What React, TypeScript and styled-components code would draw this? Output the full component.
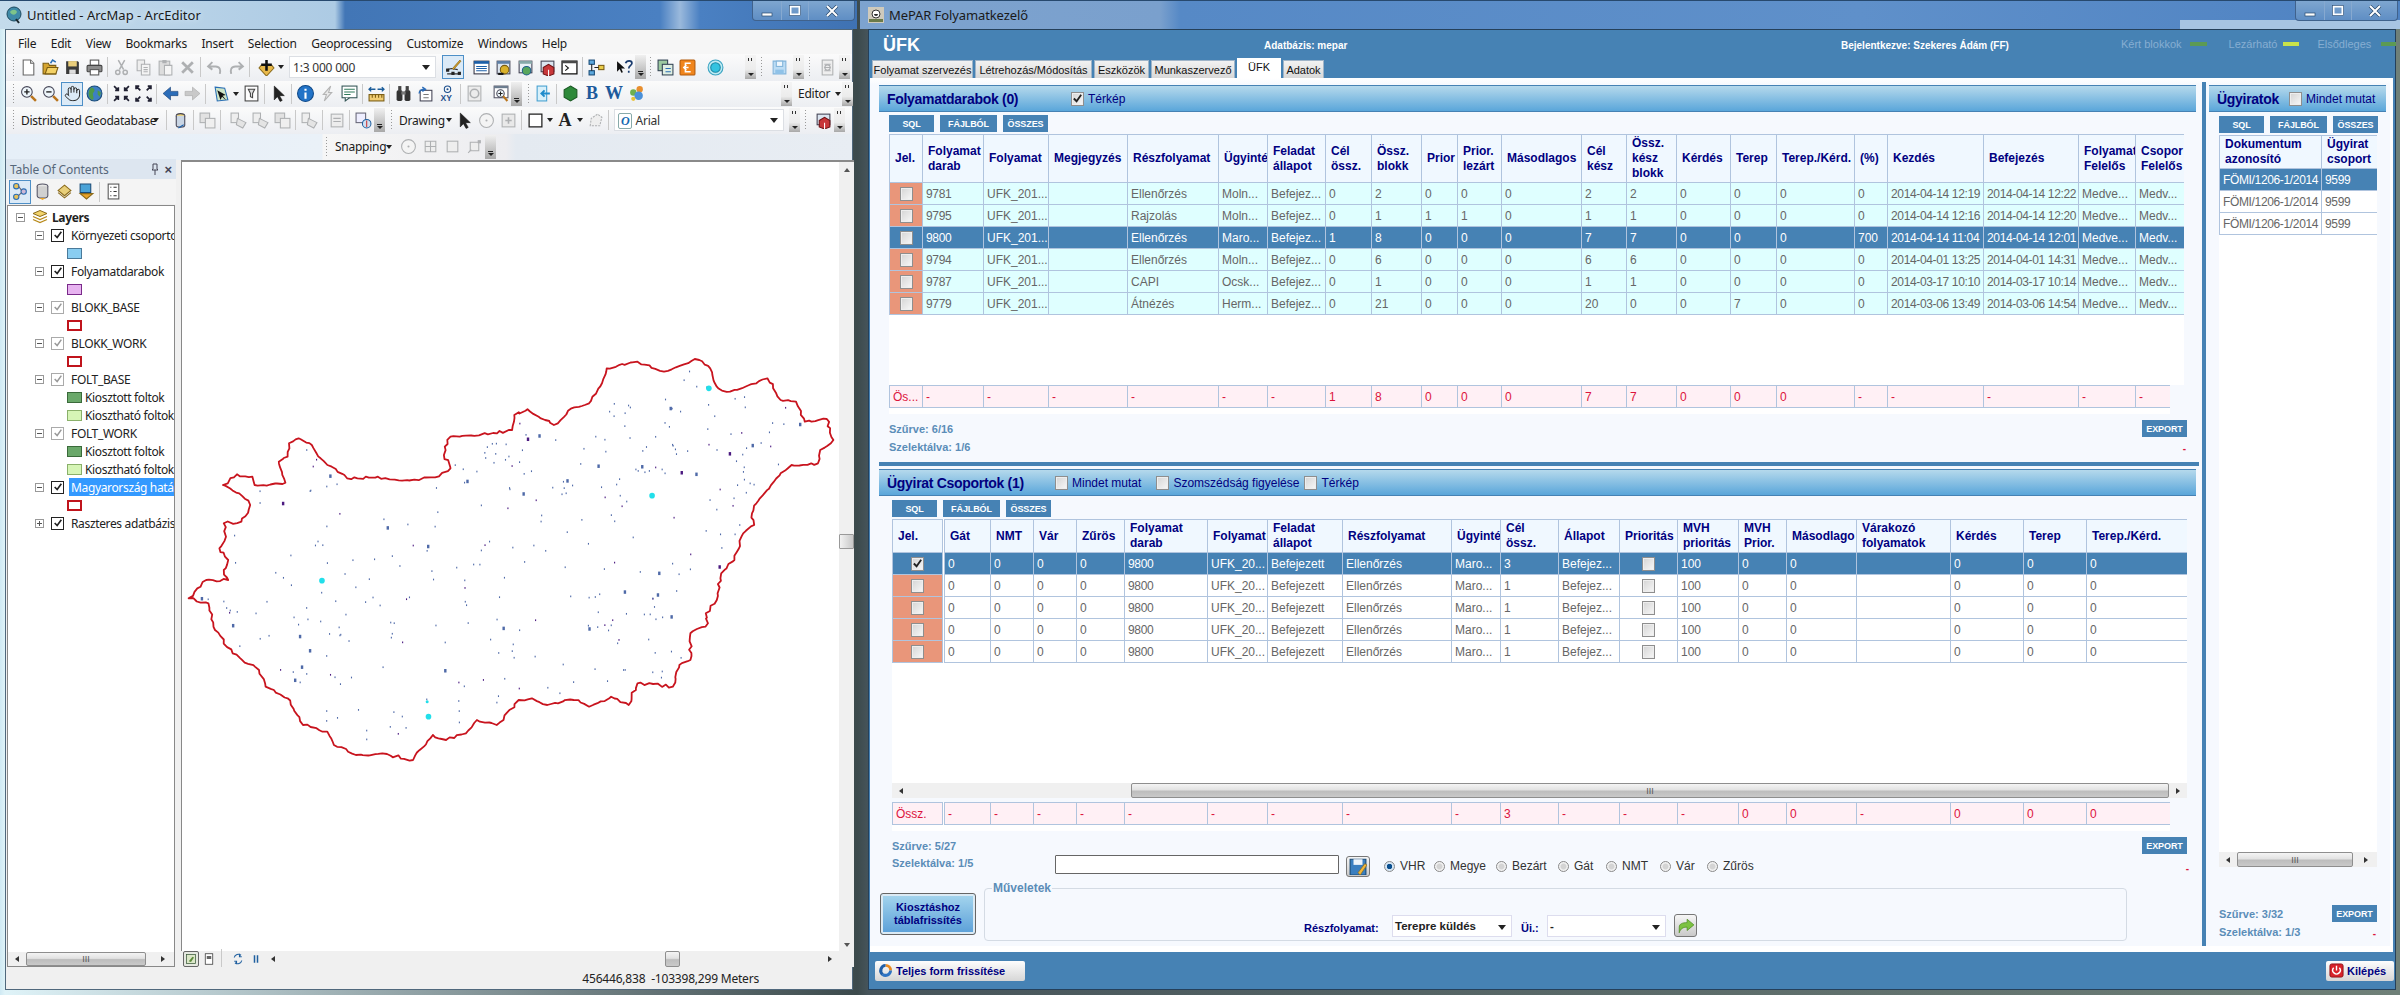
import React, { ReactNode } from 'react';
import styled, { createGlobalStyle } from 'styled-components';
import { Hand } from 'lucide-react';

const Global = createGlobalStyle`
  html, body { margin: 0; padding: 0; width: 2400px; height: 995px; overflow: hidden; background: #3c4a4c; font-family: "Liberation Sans", Arial, sans-serif; }
  * { box-sizing: border-box; }
`;

/* ---------- desktop ---------- */
const Desktop = styled.div`
  display: flex; width: 2400px; height: 995px;
  background: linear-gradient(90deg, #cfe9f3 0, #dff3f8 5px, #3c4a4c 857px, #46545a 868px, #6f8078 2396px);
`;
const ArcWin = styled.div`display: flex; flex-direction: column; width: 857px; height: 995px;`;
const ArcTitle = styled.div`
  height: 29px; display: flex; align-items: center; justify-content: space-between; padding-left: 6px; flex: none;
  background: linear-gradient(90deg, #c4dbec 0, #adcbe4 335px, #4276b6 345px, #4a80c2 660px, #9ab9dc 680px, #4a80c2 700px, #3f72b3 857px);
  border-top: 1px solid #27496e;
`;
const TitleIcon = styled.svg`width: 16px; height: 18px; flex: none;`;
const TitleText = styled.span`font: 13px "Noto Sans", sans-serif; color: #1a1a1a; margin-left: 5px; flex: 1; text-shadow: 0 0 6px #dfeffa;`;
const WinBtns = styled.div`
  display: flex; height: 20px; align-self: flex-start; margin-right: 2px; border: 1px solid #40628c; border-top: none; border-radius: 0 0 4px 4px;
  background: linear-gradient(#7ea6d0, #5f8ec4);
`;
const WinBtn = styled.div<{ $w: number }>`
  width: ${p => p.$w}px; display: flex; align-items: center; justify-content: center; border-left: 1px solid #86a9d0;
  &:first-child { border-left: none; }
  svg { width: 14px; height: 12px; }
`;
const ArcBody = styled.div`
  margin: 0 4px 0 5px; height: 961px; display: flex; flex-direction: column; background: #f0f0f0;
  border: 1px solid #50687c; border-width: 1px 1px 1px 1px;
`;
const MenuBar = styled.div`height: 24px; padding: 3px 0 0 12px; display: flex; align-items: center; gap: 14.5px; background: #f6f6f6; flex: none;`;
const MenuItem = styled.span`font: 12px "Noto Sans", sans-serif; color: #1b1b1b; letter-spacing: -0.25px;`;
const ToolRow = styled.div`
  height: 26.5px; flex: none; display: flex; align-items: center; padding-left: 6px;
  background: linear-gradient(#fbfbfb, #eceef2);
`;
const Dock = styled(ToolRow)`background: linear-gradient(90deg, #e6eff8 0, #eaf1f8 316px, #f6f6f6 317px, #ededf0 500px, #e4eaf1 510px, #e8edf3 851px);`;
const Tool = styled.div<{ $active?: boolean; $w?: number }>`
  width: ${p => p.$w ?? 22}px; height: 24px; flex: none; display: flex; align-items: center; justify-content: center;
  ${p => p.$active ? 'background: #dbeaf7; outline: 1px solid #4d8fc7; outline-offset: -1px;' : ''}
  svg { width: 17px; height: 17px; display: block; }
`;
const Grip = styled.div`width: 4px; height: 20px; flex: none; background: repeating-linear-gradient(#9a9a9a 0 1px, transparent 1px 3px); margin: 0 0 0 1px; background-size: 1px 100%; background-repeat: no-repeat;`;
const Sep = styled.div`width: 1px; height: 20px; flex: none; margin: 0 2px; background: #c9c9c9;`;
const Gap = styled.div<{ $w: number }>`width: ${p => p.$w}px; flex: none;`;
const Drop = styled.div`width: 8px; flex: none; display: flex; justify-content: center; &::after { content: ""; border: 3.5px solid transparent; border-top: 4px solid #222; border-bottom: 0; }`;
const Chevron = styled.div`
  width: 11px; height: 24px; flex: none; background: linear-gradient(#f0f0f0, #a8a8a8); display: flex; flex-direction: column; align-items: center; justify-content: flex-end; padding-bottom: 3px;
  &::before { content: ""; width: 5px; height: 1px; background: #222; margin-bottom: 1px; }
  &::after { content: ""; border: 3px solid transparent; border-top: 3px solid #222; border-bottom: 0; }
`;
const Over = styled(Chevron)`
  background: linear-gradient(#f4f4f4 0, #ececec 60%, #a8a8a8 100%); justify-content: space-between; padding: 3px 0;
  &::before { width: 6px; height: 3px; background: repeating-linear-gradient(90deg, #333 0 1px, transparent 1px 3px); }
`;
const ToolLabel = styled.span<{ $w?: number }>`font: 12px "Noto Sans", sans-serif; color: #1b1b1b; letter-spacing: -0.25px; white-space: nowrap; flex: none; ${p => p.$w ? `width:${p.$w}px;` : ''}`;
const Combo = styled.div<{ $w: number }>`
  width: ${p => p.$w}px; height: 22px; flex: none; background: #fff; border: 1px solid #dcdfe4; display: flex; align-items: center; padding: 0 5px 0 3px; justify-content: space-between;
  font: 12px "Noto Sans", sans-serif; color: #333; letter-spacing: -0.2px;
  &::after { content: ""; border: 4px solid transparent; border-top: 5px solid #222; border-bottom: 0; }
`;
const FontIcon = styled.span`font: italic bold 12px "Liberation Serif", serif; color: #1668b0; border: 1px solid #8aa; border-radius: 2px; padding: 0 2px; margin-right: 3px;`;
const SerifGlyph = styled.span<{ $c: string }>`font: bold 18px "Liberation Serif", serif; color: ${p => p.$c};`;
const Work = styled.div`flex: 1; display: flex; min-height: 0;`;
const TocCol = styled.div`width: 170px; flex: none; display: flex; flex-direction: column;`;
const TocHead = styled.div`height: 20px; flex: none; margin-top: -1px; background: #dde6f0; display: flex; align-items: center; justify-content: space-between; padding: 0 4px 0 4px;`;
const TocTitle = styled.span`font: 12px "Noto Sans", sans-serif; color: #56677a; letter-spacing: -0.1px;`;
const TocBtns = styled.span`font: bold 13px "Liberation Sans", sans-serif; color: #445; display: flex; gap: 4px; align-items: center;`;
const TocTools = styled.div`height: 25px; flex: none; display: flex; align-items: center; background: #f4f4f4; padding-left: 3px;`;
const TreeBox = styled.div`flex: 1; margin: 1px 0 0 1px; width: 168px; background: #fff; border: 1px solid #888; display: flex; flex-direction: column; min-height: 0;`;
const TreeScroll = styled.div`flex: 1; padding-top: 2px; overflow: hidden;`;
const TreeRow = styled.div<{ $pad: number }>`height: 18px; display: flex; align-items: center; padding-left: ${p => p.$pad}px; white-space: nowrap; overflow: hidden;`;
const Expander = styled.span<{ $plus?: boolean }>`
  width: 9px; height: 9px; flex: none; border: 1px solid #999; position: relative; background: #fff; margin-right: 7px;
  &::before { content: ""; position: absolute; left: 1px; right: 1px; top: 3px; height: 1px; background: #555; }
  ${p => p.$plus ? '&::after { content: ""; position: absolute; top: 1px; bottom: 1px; left: 3px; width: 1px; background: #555; }' : ''}
`;
const TocBox = styled.span<{ $gray?: boolean }>`
  width: 13px; height: 13px; flex: none; border: 1px solid ${p => p.$gray ? '#aaa' : '#222'}; background: #fff; margin-right: 7px; display: flex; align-items: center; justify-content: center;
  svg { width: 10px; height: 10px; }
`;
const TreeText = styled.span<{ $sel?: boolean }>`
  font: 12px "Noto Sans", sans-serif; color: #222; letter-spacing: -0.35px;
  ${p => p.$sel ? 'background: #3399ff; color: #fff; padding: 1px 40px 1px 2px; margin-left: -2px;' : ''}
`;
const Swatch = styled.span<{ $bg: string; $bd: string; $thick?: boolean }>`
  width: 15px; height: 11px; flex: none; background: ${p => p.$bg}; border: ${p => p.$thick ? 2 : 1}px solid ${p => p.$bd}; margin-right: 3px;
`;
const MapCol = styled.div`width: 673px; margin-left: 5px; flex: none; display: flex; flex-direction: column;`;
const MapArea = styled.div`flex: 1; display: flex; border-top: 2px solid #8a8a8a; min-height: 0;`;
const MapCanvas = styled.div`flex: 1; background: #fff; border-left: 1px solid #888; svg { display: block; }`;
const VBar = styled.div`width: 15px; flex: none; background: #f0f0f0; display: flex; flex-direction: column; align-items: center; justify-content: space-between; padding: 6px 0 4px;`;
const VThumbWrap = styled.div`flex: 1; display: flex; flex-direction: column; justify-content: flex-start; width: 100%; padding-top: 362px;`;
const VThumb = styled.div`height: 15px; width: 100%; background: linear-gradient(90deg, #f2f2f2, #c8c8c8); border: 1px solid #999; border-radius: 1px;`;
const MapBottom = styled.div`height: 16px; flex: none; display: flex; align-items: center; background: #f0f0f0;`;
const MiniTool = styled.div<{ $active?: boolean }>`
  width: 16px; height: 16px; flex: none; display: flex; align-items: center; justify-content: center; margin-right: 2px;
  ${p => p.$active ? 'background: #e5e8e0; border: 1px solid #666; border-radius: 2px;' : ''}
  svg { width: 12px; height: 12px; }
`;
const StatusBar = styled.div`height: 22px; flex: none; display: flex; align-items: center; justify-content: flex-end; padding: 1px 93px 0 0; font: 12px "Noto Sans", sans-serif; color: #222; letter-spacing: -0.2px; white-space: pre; background: #f0f0f0;`;

/* ---------- scrollbars ---------- */
const HBar = styled.div<{ $h?: number }>`height: ${p => p.$h ?? 15}px; flex: none; display: flex; align-items: center; background: #f0f0f0;`;
const Arrow = styled.div<{ $dir: 'l' | 'r' | 'u' | 'd'; $w?: number }>`
  width: ${p => p.$w ?? 18}px; flex: none; display: flex; justify-content: center;
  &::after { content: ""; border: 3.5px solid transparent;
    ${p => p.$dir === 'l' ? 'border-right: 4px solid #333; border-left: 0;' : ''}
    ${p => p.$dir === 'r' ? 'border-left: 4px solid #333; border-right: 0;' : ''}
    ${p => p.$dir === 'u' ? 'border-bottom: 4px solid #555; border-top: 0;' : ''}
    ${p => p.$dir === 'd' ? 'border-top: 4px solid #555; border-bottom: 0;' : ''}
  }
`;
const HThumb = styled.div<{ $w?: number }>`
  ${p => p.$w ? `width:${p.$w}px; flex:none;` : 'flex: 1;'}
  height: 100%; background: linear-gradient(#f4f4f4 0, #e2e2e2 45%, #bdbdbd 55%, #c9c9c9 100%); border: 1px solid #8e8e8e; border-radius: 2px;
  display: flex; align-items: center; justify-content: center; font: 9px "Liberation Sans", sans-serif; color: #555;
`;

/* ---------- right window ---------- */
const RightWin = styled.div`flex: 1; display: flex; flex-direction: column; min-width: 0; padding-left: 3px;`;
const RTitle = styled.div`
  height: 29px; flex: none; display: flex; align-items: center; justify-content: space-between; padding-left: 8px;
  border-top: 1px solid #27496e;
  background:
    linear-gradient(90deg, #a7c4e2, #a7c4e2) 1320px 19px / 230px 10px no-repeat,
    linear-gradient(90deg, #7da3cf 0, #7aa0cd 300px, #5689c6 320px, #5f90ca 1000px, #4e82c2 1540px);
`;
const RTitleText = styled.span`font: 13px "Noto Sans", sans-serif; color: #1a1a1a; margin-left: 5px; flex: 1; letter-spacing: -0.1px;`;
const Frame = styled.div`margin-left: 8px; margin-right: 4px; height: 961px; display: flex; flex-direction: column; background: #4682b4; border: 1px solid #25405a;`;
const HeadTop = styled.div`height: 30px; flex: none; display: grid; grid-template-columns: 381px 577px 280px 1fr; align-items: center; padding-left: 14px; color: #fff;`;
const Brand = styled.span`font: bold 18px "Liberation Sans", sans-serif;`;
const HeadInfo = styled.span`font: bold 10px "Liberation Sans", sans-serif; white-space: nowrap;`;
const Legend = styled.div`display: flex; align-items: center; font: 11px "Liberation Sans", sans-serif; color: #86aed2; white-space: nowrap; margin-top: -3px;`;
const Led = styled.span<{ $c: string; $ml: number; $mr: number; $w: number }>`width: ${p => p.$w}px; height: 4px; background: ${p => p.$c}; margin: 0 ${p => p.$mr}px 0 ${p => p.$ml}px; flex: none;`;
const TabRow = styled.div`height: 18px; flex: none; display: flex; gap: 2px; padding-left: 3px; align-items: flex-end;`;
const Tab = styled.div<{ $w: number; $on?: boolean }>`
  width: ${p => p.$w}px; height: ${p => p.$on ? 20 : 18}px; flex: none; display: flex; justify-content: center; font: 11px "Liberation Sans", sans-serif; color: #111; white-space: nowrap; line-height: ${p => p.$on ? 17 : 18}px;
  background: ${p => p.$on ? '#fff' : 'linear-gradient(#f2f2f2, #d8d8d8)'}; border: 1px solid ${p => p.$on ? '#fff' : '#9fb4c8'}; border-bottom: none;
`;
const Content = styled.div`flex: 1; display: flex; min-height: 0; margin-left: 1px; margin-right: 2px; background: linear-gradient(#ffffff 0, #f6f9fe 7px, #f6f9fe 100%); border-bottom: 6px solid #fff; border-right: 3px solid #fff; padding: 7px 0 0 9px;`;
const MainCol = styled.div`width: 1320px; flex: none; display: flex; flex-direction: column;`;
const Section = styled.div<{ $h: number }>`height: ${p => p.$h}px; flex: none; display: flex; flex-direction: column;`;
const PanelHead = styled.div<{ $w?: number }>`
  height: 27px; flex: none; width: ${p => p.$w ?? 1317}px; display: flex; align-items: center; padding-left: 8px;
  background: linear-gradient(#b5d9ec, #5aa6da); border-top: 1px solid #4682b4; border-bottom: 1px solid #4682b4;
`;
const PanelTitle = styled.span<{ $w?: number }>`font: bold 14px "Liberation Sans", sans-serif; color: #000080; white-space: nowrap; ${p => p.$w ? `width:${p.$w}px;` : ''} flex: none; letter-spacing: -0.3px;`;
const OptLabel = styled.label<{ $mr?: number }>`display: flex; align-items: center; gap: 4px; font: 12px "Liberation Sans", sans-serif; color: #000080; margin-right: ${p => p.$mr ?? 0}px; white-space: nowrap; flex: none;`;
const BtnRow = styled.div<{ $ml: number; $mt: number }>`height: 17px; flex: none; display: flex; gap: 6px; margin: ${p => p.$mt}px 0 0 ${p => p.$ml}px;`;
const SmallBtn = styled.div<{ $w: number }>`width: ${p => p.$w}px; height: 17px; flex: none; background: #4682b4; color: #fff; font: bold 9px "Liberation Sans", sans-serif; display: flex; align-items: center; justify-content: center; letter-spacing: -0.1px;`;
const GridWrap = styled.div<{ $ml: number; $h: number; $w: number }>`margin: 2px 0 0 ${p => p.$ml}px; width: ${p => p.$w}px; height: ${p => p.$h}px; background: #fff; overflow: hidden; flex: none;`;
const Table = styled.table<{ $w: number; $double?: boolean }>`
  table-layout: fixed; border-collapse: collapse; width: ${p => p.$w}px;
  ${p => p.$double ? 'td:nth-child(2), th:nth-child(2) { border-left: 3px double #b0c4de; }' : ''}
`;
const HeadRow = styled.tr<{ $h: number }>`height: ${p => p.$h}px;`;
const Th = styled.th`
  background: #f0f8ff; border: 1px solid #b0c4de; color: #000080; font: bold 12px/15px "Liberation Sans", sans-serif; text-align: left; padding: 0 0 0 5px; overflow: hidden; white-space: nowrap;
`;
const Tr = styled.tr<{ $bg: string }>`height: 22px; background: ${p => p.$bg};`;
const Td = styled.td<{ $sel?: boolean; $jel?: boolean; $center?: boolean; $tight?: boolean }>`
  border: 1px solid #b0c4de; font: 12px "Liberation Sans", sans-serif; color: ${p => p.$sel ? '#fff' : '#666'}; padding: 0 0 0 3px; overflow: hidden; white-space: nowrap;
  ${p => p.$jel && !p.$sel ? 'background: #e9967a;' : ''}
  ${p => p.$center ? 'padding: 0; text-align: center;' : ''}
  ${p => p.$tight ? 'letter-spacing: -0.35px;' : ''}
`;
const SumTd = styled.td`
  border: solid #b0c4de; border-width: 1px; background: #fff0f5; color: #dc143c; font: 12px "Liberation Sans", sans-serif; padding: 0 0 0 3px; height: 22px; overflow: hidden; white-space: nowrap;
`;
const Check = styled.span<{ $on?: boolean }>`
  width: 13px; height: 14px; display: inline-flex; vertical-align: middle; align-items: center; justify-content: center; flex: none;
  background: linear-gradient(135deg, #d4d4d4, #f8f8f8); border: 1px solid #8e8e8e; box-shadow: inset 0 0 0 1px #eee;
  svg { width: 11px; height: 11px; }
`;
const SumWrap = styled.div<{ $ml: number; $w: number; $mt?: number }>`margin: ${p => p.$mt ?? 0}px 0 0 ${p => p.$ml}px; width: ${p => p.$w}px; height: 29px; background: #fff; overflow: hidden; flex: none;`;
const StatusRow = styled.div<{ $ml: number; $w: number; $mt: number; $items?: string }>`margin: ${p => p.$mt}px 0 0 ${p => p.$ml}px; width: ${p => p.$w}px; display: flex; justify-content: space-between; align-items: ${p => p.$items ?? 'flex-start'}; flex: none;`;
const StatText = styled.div`font: bold 11px/18px "Liberation Sans", sans-serif; color: #5b8db8; white-space: nowrap;`;
const ExportCol = styled.div`display: flex; flex-direction: column; align-items: flex-end; flex: none;`;
const Dash = styled.span`font: bold 10px/12px "Liberation Sans", sans-serif; color: #dc143c; margin: 6px 1px 0 0;`;
const ExportBtn = styled(SmallBtn)`font-weight: bold; width: 45px;`;
const HFill = styled.div<{ $w: number; $ml: number; $mt?: number }>`width: ${p => p.$w}px; margin: ${p => p.$mt ?? 0}px 0 0 ${p => p.$ml}px; flex: none;`;
const Splitter = styled.div`height: 4px; flex: none; background: #4682b4;`;
const FilterRow = styled.div`display: flex; align-items: center; margin: 0 0 0 13px; height: 22px; width: 1298px; flex: none;`;
const FilterText = styled(StatText)`width: 163px; margin-top: -6px; flex: none;`;
const FilterInput = styled.div`width: 284px; height: 19px; flex: none; background: #fff; border: 1px solid #666; border-radius: 1px; margin-top: -3px;`;
const IconBtn = styled.div<{ $w: number; $h: number }>`
  width: ${p => p.$w}px; height: ${p => p.$h}px; flex: none; background: linear-gradient(#f6f6f6, #c9c9c9); border: 1px solid #777; border-radius: 3px; display: flex; align-items: center; justify-content: center;
  svg { width: 18px; height: 18px; }
`;
const RadioRow = styled.div`display: flex; align-items: center; margin-left: 14px; flex: 1; font: 12px "Liberation Sans", sans-serif; color: #333; white-space: nowrap;`;
const RadioItem = styled.span<{ $w: number }>`display: flex; align-items: center; gap: 5px; width: ${p => p.$w}px; flex: none;`;
const Radio = styled.span<{ $on?: boolean }>`
  width: 11px; height: 11px; border-radius: 50%; flex: none; border: 1px solid #8a8a8a;
  background: ${p => p.$on ? 'radial-gradient(circle, #0a4f8f 0 2.5px, #d6e6f4 3px)' : 'radial-gradient(circle, #d4d4d4 0 2.5px, #f2f2f2 3.5px)'};
`;
const BottomRow = styled.div`display: flex; margin: 4px 0 0 1px; flex: none;`;
const BigBtn = styled.div`
  width: 96px; height: 42px; flex: none; margin-top: 12px; border: 1px solid #666; border-radius: 3px; box-shadow: inset 0 0 0 2px #dbeaf4;
  background: linear-gradient(#a6d6ee, #5a9fd8); display: flex; align-items: center; justify-content: center; text-align: center; font: bold 11px/13px "Liberation Sans", sans-serif; color: #000080;
`;
const Field = styled.fieldset`
  width: 1143px; height: 60px; margin: 0 0 0 8px; padding: 0 0 0 319px; border: 1px solid #d4dbe4; border-radius: 4px; display: flex; align-items: flex-start; flex: none;
`;
const FieldLegend = styled.legend`font: bold 12px/14px "Liberation Sans", sans-serif; color: #5b8db8; padding: 0 1px; margin-left: -312px;`;
const FieldInner = styled.div`display: flex; align-items: center; margin-top: 19px; height: 23px; width: 100%;`;
const FieldLabel = styled.span<{ $w: number }>`font: bold 11px "Liberation Sans", sans-serif; color: #000080; width: ${p => p.$w}px; flex: none; margin-top: 4px;`;
const Select = styled.div<{ $w: number }>`
  width: ${p => p.$w}px; height: 22px; flex: none; background: #fff; border: 1px solid #dde; display: flex; align-items: center; justify-content: space-between; padding: 0 5px 0 2px; font: bold 11.5px "Liberation Sans", sans-serif; color: #222;
  &::after { content: ""; border: 4px solid transparent; border-top: 5px solid #222; border-bottom: 0; margin-top: 3px; }
`;
const VDivider = styled.div`width: 4px; flex: none; background: #4682b4; margin: -3px 3px 0 3px;`;
const SideCol = styled.div`width: 177px; flex: none; display: flex; flex-direction: column;`;
const Footer = styled.div`height: 37px; flex: none; display: flex; align-items: center; justify-content: space-between; padding: 0 1px 0 6px; background: #4682b4;`;
const FootBtn = styled.div<{ $w: number }>`
  width: ${p => p.$w}px; height: 20px; flex: none; display: flex; align-items: center; gap: 3px; padding-left: 3px; border-radius: 2px; background: linear-gradient(#fdfdfd, #d6d6d6); font: bold 11px "Liberation Sans", sans-serif; color: #000080; white-space: nowrap;
  svg { width: 15px; height: 15px; flex: none; }
`;

/* ---------- icons ---------- */
const gr = '#aeb0b2';
const G: Record<string, ReactNode> = {
  new: <><path d="M3 1h7l3 3v11H3z" fill="#fff" stroke="#666"/><path d="M10 1v3h3" fill="#eee" stroke="#666"/></>,
  open: <><path d="M1 4h5l1 2h6v8H1z" fill="#d6a52f" stroke="#7a5c12"/><path d="M3 14l2-6h10l-2 6z" fill="#f3d165" stroke="#7a5c12"/><path d="M8 4l2-3 3 2" fill="none" stroke="#2a6fb5" strokeWidth="1.4"/></>,
  save: <><path d="M2 2h11l1 1v11H2z" fill="#3a3a3a"/><rect x="4" y="2" width="8" height="5" fill="#e9cd7b"/><rect x="5" y="10" width="6" height="4" fill="#ddd"/></>,
  print: <><rect x="4" y="1" width="8" height="5" fill="#fff" stroke="#555"/><rect x="1" y="6" width="14" height="6" rx="1" fill="#8b8b8b" stroke="#444"/><rect x="4" y="10" width="8" height="5" fill="#fff" stroke="#555"/></>,
  cut: <><path d="M5 1l5 9M11 1L6 10" stroke={gr} strokeWidth="1.4" fill="none"/><circle cx="4.5" cy="12.5" r="2" fill="none" stroke={gr} strokeWidth="1.4"/><circle cx="11.5" cy="12.5" r="2" fill="none" stroke={gr} strokeWidth="1.4"/></>,
  copy: <><path d="M2 1h7v10H2z" fill="#eee" stroke={gr}/><path d="M6 5h8v10H6z" fill="#f4f4f4" stroke={gr}/><path d="M8 8h4M8 10h4M8 12h4" stroke={gr}/></>,
  paste: <><rect x="2" y="2" width="10" height="13" fill="#ddd" stroke={gr}/><rect x="5" y="1" width="4" height="3" fill={gr}/><path d="M7 6h7v9H7z" fill="#f5f5f5" stroke={gr}/></>,
  del: <path d="M3 3l10 10M13 3L3 13" stroke={gr} strokeWidth="2.6"/>,
  undo: <path d="M6 3L2 7l4 3M2 7h7c4 0 5 3 4 7" fill="none" stroke={gr} strokeWidth="1.8"/>,
  redo: <path d="M10 3l4 4-4 3M14 7H7c-4 0-5 3-4 7" fill="none" stroke={gr} strokeWidth="1.8"/>,
  add: <><path d="M8 16L1 8.5 3 6h10l2 2.500z" fill="#e9b94a" stroke="#8a6a1a"/><path d="M8 1v10M3 5.500h10" stroke="#111" strokeWidth="2.400"/></>,
  editor: <><path d="M2 14h12M2 10l4-1 6 1" fill="none" stroke="#333"/><rect x="1" y="9" width="3" height="3" fill="#222"/><rect x="6" y="12" width="3" height="3" fill="#222"/><rect x="12" y="12" width="3" height="3" fill="#222"/><path d="M7 9l7-8 1 1-7 8z" fill="#d9a42a" stroke="#7a5c12" strokeWidth=".6"/></>,
  tbl: <><rect x="1" y="2" width="14" height="12" fill="#fff" stroke="#334"/><rect x="1" y="2" width="14" height="2.500" fill="#1c5fa8"/><path d="M3 7h10M3 9h10M3 11h10" stroke="#1c5fa8"/></>,
  cat: <><rect x="2" y="2" width="12" height="12" fill="#dbe5f0" stroke="#445"/><rect x="2" y="2" width="12" height="2.500" fill="#5d7fa6"/><ellipse cx="9" cy="10" rx="4" ry="4" fill="#d9b12a" stroke="#7a5c12"/><path d="M3 14h5" stroke="#111" strokeWidth="2"/></>,
  srch: <><rect x="2" y="2" width="12" height="11" fill="#eaf0f6" stroke="#445"/><rect x="2" y="2" width="12" height="2.500" fill="#8aa"/><circle cx="9" cy="11" r="4" fill="#58a65c" stroke="#1d5e8a"/></>,
  tbox: <><rect x="2" y="2" width="12" height="10" fill="#dbe5f0" stroke="#445"/><path d="M4 8l5-3 5 3v6l-5 2-5-2z" fill="#c8373a" stroke="#6e1416"/><path d="M9 10v6" stroke="#fff"/></>,
  py: <><rect x="1" y="2" width="14" height="12" fill="#fff" stroke="#111" strokeWidth="1.200"/><rect x="1" y="2" width="14" height="2" fill="#4a4a4a"/><path d="M4 6l3 2.500-3 2.500" fill="none" stroke="#111"/></>,
  model: <><rect x="1" y="1" width="5" height="4" fill="#5da9de" stroke="#1a4c78"/><rect x="10" y="6" width="5" height="4" fill="#e9cd4a" stroke="#7a5c12"/><rect x="1" y="11" width="5" height="4" fill="#5da9de" stroke="#1a4c78"/><path d="M3.500 5v6M6 8h4" stroke="#222"/></>,
  help: <><path d="M1 2v10l2.500-2.500L5 13l1.500-.6L5 9h3.500z" fill="#111"/><path d="M9 4c1-3 6-3 6 0 0 2-3 2-3 5M12 11v2" fill="none" stroke="#1b3c6e" strokeWidth="1.600"/></>,
  t1: <><rect x="1" y="1" width="9" height="10" fill="#9cc9a0" stroke="#345"/><rect x="5" y="5" width="10" height="10" fill="#dfeee2" stroke="#345"/><path d="M8 9h5M8 12h5" stroke="#2a6fb5"/></>,
  orange: <><rect x="1" y="1" width="14" height="14" rx="1" fill="#f0851c" stroke="#b25a0a"/><path d="M11 4H6v8h5M9 8H5m2-2.500L4.500 8 7 10.500" fill="none" stroke="#fff" strokeWidth="1.400"/></>,
  ring: <><circle cx="8" cy="8" r="7" fill="#bfeaf2" stroke="#38a3c2"/><circle cx="8" cy="8" r="4.500" fill="#33c3e0" stroke="#1d8aa8"/></>,
  flop: <><path d="M2 2h12v12H2z" fill="#bcdcf4" stroke="#82b4da"/><rect x="5" y="2" width="6" height="5" fill="#eff7fd" stroke="#82b4da"/><rect x="4" y="10" width="8" height="4" fill="#8fc2e8"/></>,
  t3: <><rect x="3" y="1" width="10" height="14" fill="#eee" stroke={gr}/><path d="M5 5h6M5 8h6M5 11h6" stroke={gr}/><circle cx="8" cy="8" r="2.500" fill="none" stroke={gr}/></>,
  zin: <><circle cx="6.500" cy="6.500" r="5" fill="#eef6fb" stroke="#445"/><path d="M4 6.500h5M6.500 4v5" stroke="#222" strokeWidth="1.300"/><path d="M10.500 10.500l4.500 4.500" stroke="#b9741c" strokeWidth="2.400"/></>,
  zout: <><circle cx="6.500" cy="6.500" r="5" fill="#eef6fb" stroke="#445"/><path d="M4 6.500h5" stroke="#222" strokeWidth="1.300"/><path d="M10.500 10.500l4.500 4.500" stroke="#b9741c" strokeWidth="2.400"/></>,
  globe: <><circle cx="8" cy="8" r="7" fill="#3d7fc4" stroke="#1a4c78"/><path d="M5 2c3 1 4 3 2 5S9 12 6 14C2 12 1 6 5 2zM11 5l3 2-1 4-2-2z" fill="#4f9a48"/></>,
  fin: <path d="M1 1l4 4M5 2v3H2M15 1l-4 4M11 2v3h3M1 15l4-4M5 14v-3H2M15 15l-4-4M11 14v-3h3" fill="none" stroke="#223" strokeWidth="1.600"/>,
  fout: <path d="M5 5L1 1M1 4V1h3M11 5l4-4M15 4V1h-3M5 11l-4 4M1 12v3h3M11 11l4 4M15 12v3h-3" fill="none" stroke="#223" strokeWidth="1.600"/>,
  back: <path d="M1 8l7-6v4h7v4H8v4z" fill="#2c6db8" stroke="#1a4478" strokeWidth=".6"/>,
  fwd: <path d="M15 8L8 2v4H1v4h7v4z" fill="#c9c9c9" stroke="#aaa" strokeWidth=".6"/>,
  sel: <><path d="M2 2l9 1 3 11-10 1z" fill="#cfe6c8" stroke="#2a6fb5"/><path d="M4 5l3 9 1.500-3 3.500 3-.6-1-2.400-3 3-.6z" fill="#111"/></>,
  clr: <><rect x="2" y="1" width="12" height="14" fill="#fdfdfd" stroke="#444"/><path d="M5 4h6L9 8v4l-2-1V8z" fill="#ddd" stroke="#444"/></>,
  arrow: <path d="M4 1v13l3-3 2.500 4.500 2-1L9 10h4.500z" fill="#222" stroke="#111" strokeWidth=".5"/>,
  info: <><circle cx="8" cy="8" r="7.500" fill="#2273c7" stroke="#114a88"/><path d="M8 3.500v1.800M8 7v6" stroke="#fff" strokeWidth="2"/></>,
  flash: <path d="M11 1L4 9h3l-2 6 7-8H9z" fill="#e8e8e8" stroke="#b4b4b4"/>,
  popup: <><rect x="1" y="1" width="14" height="11" fill="#fff" stroke="#355"/><path d="M4 12l0 3 4-3" fill="#fff" stroke="#355"/><path d="M3 4h10M3 6.500h10M3 9h6" stroke="#2f7a5a"/></>,
  meas: <><path d="M1 4h6M3 2L1 4l2 2M15 4H9M13 2l2 2-2 2" fill="none" stroke="#1d5e9a" strokeWidth="1.300"/><rect x="1" y="9" width="14" height="6" fill="#f1cd72" stroke="#7a5c12"/><path d="M4 9v3M7 9v3M10 9v3M13 9v3" stroke="#7a5c12"/></>,
  find: <><rect x="1.500" y="5" width="5.500" height="10" rx="1.500" fill="#333"/><rect x="9" y="5" width="5.500" height="10" rx="1.500" fill="#333"/><rect x="3" y="1" width="3" height="5" fill="#444"/><rect x="10" y="1" width="3" height="5" fill="#444"/><rect x="6" y="6" width="4" height="3" fill="#777"/></>,
  route: <><rect x="3" y="5" width="11" height="10" fill="#fff" stroke="#445"/><path d="M2 8c0-3 3-4 5-4M5 2l3 2-3 2" fill="none" stroke="#2c6db8" strokeWidth="1.300"/><path d="M6 9h5M6 12h5" stroke="#777"/></>,
  xy: <><circle cx="8" cy="4" r="3" fill="none" stroke="#1d4f8c"/><circle cx="8" cy="4" r="1" fill="#1d4f8c"/><text x="1.500" y="15" fontFamily="Liberation Sans" fontSize="8" fontWeight="700" fill="#1d4f8c">XY</text></>,
  grayDoc: <><rect x="2" y="1" width="12" height="14" fill="#ececec" stroke={gr}/><circle cx="8" cy="8" r="4" fill="none" stroke={gr} strokeWidth="1.500"/></>,
  zoomWin: <><rect x="2" y="1" width="13" height="11" fill="#fff" stroke="#556"/><rect x="2" y="1" width="13" height="2" fill="#6b7c8e"/><circle cx="8" cy="8" r="3.500" fill="#eef6fb" stroke="#445"/><path d="M6 8h4M8 6v4" stroke="#222"/><path d="M10.500 10.500l4 4.500" stroke="#b9741c" strokeWidth="2"/></>,
  exit: <><rect x="2" y="1" width="9" height="14" fill="#d8f0fa" stroke="#45a0d0"/><path d="M14 8H6M9 5L6 8l3 3" fill="none" stroke="#1f8ccc" strokeWidth="1.800"/></>,
  leaf: <path d="M8 1l6 3.500v7L8 15l-6-3.500v-7z" fill="#2e8a3a" stroke="#1c5a24"/>,
  multi: <><circle cx="11" cy="4" r="3" fill="#e88f2e"/><circle cx="5" cy="7" r="3" fill="#6fb04e"/><circle cx="10" cy="10" r="4" fill="#4a90d8"/><circle cx="5" cy="13" r="2" fill="#e8c23a"/></>,
  db: <><ellipse cx="8" cy="3.500" rx="4" ry="2" fill="#f0d06a" stroke="#445"/><path d="M4 3.500v9c0 2.500 8 2.500 8 0v-9" fill="#c9d5e4" stroke="#445"/><path d="M6 15l5-3" stroke="#1c5fa8"/></>,
  g1: <><rect x="1" y="1" width="9" height="9" fill="#e2e2e2" stroke={gr}/><rect x="6" y="6" width="9" height="9" fill="#efefef" stroke={gr}/></>,
  g2: <><rect x="1" y="1" width="7" height="9" fill="#eee" stroke={gr}/><path d="M7 6l8 4-3 5-6-3z" fill="#e4e4e4" stroke={gr}/></>,
  g3: <><rect x="3" y="2" width="11" height="12" fill="#ededed" stroke={gr}/><path d="M5 6h7M5 9h7" stroke={gr}/></>,
  db2: <><rect x="1" y="1" width="9" height="9" fill="#eef" stroke="#667"/><circle cx="11" cy="11" r="4" fill="#cfe0f2" stroke="#1f5f9f"/><path d="M11 8v6" stroke="#c33"/></>,
  gcirc: <><circle cx="8" cy="8" r="6.500" fill="#f4f4f4" stroke={gr}/><circle cx="8" cy="8" r="1" fill={gr}/></>,
  gadd: <><rect x="2" y="2" width="12" height="12" fill="#e9e9e9" stroke={gr}/><path d="M5 8h6M8 5v6" stroke={gr} strokeWidth="1.500"/></>,
  rect: <rect x="2" y="2" width="12" height="12" fill="#fff" stroke="#222" strokeWidth="1.200"/>,
  gpoly: <path d="M3 13l1-7 6-4 4 3-2 8z" fill="#eee" stroke={gr} strokeDasharray="2 1"/>,
  gnet: <path d="M3 3h10v10H3zM8 3v10M3 8h10" fill="#eee" stroke={gr}/>,
  gsq: <rect x="3" y="3" width="10" height="10" fill="#eee" stroke={gr}/>,
  gend: <><path d="M4 4h8v8H4z" fill="#eee" stroke={gr}/><rect x="11" y="2" width="3" height="3" fill={gr}/><path d="M2 14l3-3" stroke={gr}/></>,
  tDraw: <><circle cx="4" cy="3" r="2.500" fill="#e8c25a" stroke="#2a6fb5"/><circle cx="11" cy="8" r="2.500" fill="#cdb7d6" stroke="#2a6fb5"/><circle cx="4" cy="13" r="2.500" fill="#e8c25a" stroke="#2a6fb5"/><path d="M6 3l3 4M6 12l3-3" stroke="#667"/></>,
  tDb: <><ellipse cx="8" cy="3" rx="5" ry="2" fill="#e6e6e6" stroke="#556"/><path d="M3 3v9c0 3 10 3 10 0V3" fill="#d0d0d0" stroke="#556"/><path d="M5 14l3 2 3-2z" fill="#e8a32a"/></>,
  tVis: <><path d="M8 2l6 5-6 5-6-5z" fill="#e8cf7a" stroke="#8a6a1a"/><path d="M2 9l6 5 6-5" fill="none" stroke="#8a6a1a"/></>,
  tSel: <><path d="M2 1h10v8H2z" fill="#4aa3d8" stroke="#1a4c78"/><path d="M2 10l6 5 6-5z" fill="#e8a32a" stroke="#8a6a1a"/></>,
  tOpt: <><rect x="3" y="1" width="10" height="14" fill="#fff" stroke="#555"/><path d="M5 4h1M8 4h3M5 8h1M8 8h3M5 12h1M8 12h3" stroke="#333"/></>,
  lyr: <><path d="M8 1l7 3-7 3-7-3z" fill="#f2d36a" stroke="#8a6a1a"/><path d="M1 7l7 3 7-3M1 10l7 3 7-3" fill="none" stroke="#b88a1a" strokeWidth="1.300"/></>,
  dv: <><rect x="2" y="2" width="12" height="12" fill="#dbe7c8" stroke="#3a5a3a"/><path d="M5 11l5-6 2 1-4 6z" fill="#5c8a3a"/></>,
  lv: <><rect x="3" y="1" width="10" height="14" fill="#fff" stroke="#333"/><rect x="5" y="4" width="6" height="4" fill="#666"/></>,
  ref: <path d="M12 3a5.500 5.500 0 0 0-9 3M4 13a5.500 5.500 0 0 0 9-3M10 1v4h3M6 15v-4H3" fill="none" stroke="#1f5f9f" strokeWidth="1.500"/>,
  pause: <path d="M5 3h2v10H5zM9 3h2v10H9z" fill="#1f5f9f"/>,
  disk: <><path d="M1 2h14v14H1z" fill="#3b7fc0" stroke="#1a4c78"/><rect x="4" y="2" width="8" height="5" fill="#eef4fa"/><path d="M8 14l6-8 2 1-6 9z" fill="#f2b63a" stroke="#8a6a1a" strokeWidth=".6"/></>,
  go: <path d="M2 14V9c0-3 3-4 7-4V2l6 5-6 5V9C6 9 3 10 2 14z" fill="#7cc241" stroke="#4f8f24" strokeWidth=".7"/>,
  refresh: <><path d="M8 1a7 7 0 0 1 7 7h-3A4 4 0 0 0 8 4z" fill="#e98a20"/><path d="M15 8a7 7 0 0 1-11 5.500L6 11a4 4 0 0 0 6-3z" fill="#2e74c4"/><path d="M4 13.500A7 7 0 0 1 8 1v3a4 4 0 0 0-2 7z" fill="#1f5fa8"/></>,
  power: <><rect x="1" y="1" width="14" height="14" rx="2" fill="#d8232a" stroke="#8e1116"/><path d="M5 5a4 4 0 1 0 6 0M8 3v5" fill="none" stroke="#fff" strokeWidth="1.500"/></>,
  tick: <path d="M2 6l3 3 5-7" fill="none" stroke="#222" strokeWidth="2"/>,
  tickG: <path d="M2 6l3 3 5-7" fill="none" stroke="#999" strokeWidth="1.800"/>,
};
const Ico = ({ n, box = 16 }: { n: string; box?: number }) => (
  <svg viewBox={`0 0 ${box} ${box}`} xmlns="http://www.w3.org/2000/svg">{G[n]}</svg>
);

type Token = string | number | { label: string; w?: number } | { combo: string; w: number; font?: boolean } | { serif: string; c: string };
const renderTokens = (list: Token[]) => list.map((t, i) => {
  if (typeof t === 'number') return <Gap key={i} $w={t} />;
  if (typeof t === 'object') {
    if ('label' in t) return <ToolLabel key={i} $w={t.w}>{t.label}</ToolLabel>;
    if ('combo' in t) return <Combo key={i} $w={t.w}><span>{t.font ? <FontIcon>O</FontIcon> : null}{t.combo}</span></Combo>;
    return <Tool key={i}><SerifGlyph $c={t.c}>{t.serif}</SerifGlyph></Tool>;
  }
  if (t === 'grip') return <Grip key={i} />;
  if (t === '|') return <Sep key={i} />;
  if (t === 'v') return <Drop key={i} />;
  if (t === 'chev') return <Chevron key={i} />;
  if (t === 'over') return <Over key={i} />;
  if (t === 'pan!') return <Tool key={i} $active><Hand size={17} strokeWidth={1.4} color="#222" /></Tool>;
  const active = t.endsWith('!');
  return <Tool key={i} $active={active}><Ico n={t.replace('!', '')} /></Tool>;
});

const row1: Token[] = ['grip', 'new', 'open', 'save', 'print', '|', 'cut', 'copy', 'paste', 'del', '|', 'undo', 'redo', '|', 3, 'add', 'v', 4, { combo: '1:3 000 000', w: 147 }, 6, 'editor!', 6, 'tbl', 'cat', 'srch', 'tbox', 'py', '|', 'model', 6, 'help', 'chev', 3, 'grip', 't1', 'orange', 6, 'ring', 19, 'over', 4, 'grip', 3, 'flop', 3, 'over', 4, 'grip', 3, 't3', 1, 'over'];
const row2: Token[] = ['grip', 'zin', 'zout', 'pan!', 'globe', '|', 'fin', 'fout', '|', 'back', 'fwd', '|', 2, 'sel', 'v', 'clr', '|', 'arrow', '|', 'info', 'flash', 'popup', '|', 'meas', '|', 'find', 'route', 'xy', '|', 'grayDoc', 4, 'zoomWin', 'chev', 5, 'grip', 'exit', '|', 'leaf', { serif: 'B', c: '#1c5a9c' }, { serif: 'W', c: '#1c5a9c' }, 'multi', 134, 'over', 6, { label: 'Editor', w: 36 }, 'v', 'over'];
const row3: Token[] = ['grip', 4, { label: 'Distributed Geodatabase', w: 131 }, 'v', 4, '|', 'db', '|', 'g1', '|', 4, 'g2', 'g2', 'g1', '|', 'g2', '|', 'g3', '|', 'db2', 'chev', 5, 'grip', 4, { label: 'Drawing', w: 46 }, 'v', 'arrow', 'gcirc', 'gadd', '|', 'rect', 'v', { serif: 'A', c: '#222' }, 'v', 'gpoly', '|', 3, { combo: 'Arial', w: 170, font: true }, 5, 'over', 4, 'grip', 3, 'tbox', 'over'];
const row4: Token[] = [313, 'grip', 5, { label: 'Snapping', w: 50 }, 'v', 4, 'gcirc', 'gnet', 'gsq', 'gend', 'chev'];

/* ---------- map ---------- */
const rng = (s: number) => () => { s |= 0; s = s + 0x6D2B79F5 | 0; let t = Math.imul(s ^ s >>> 15, 1 | s); t = t + Math.imul(t ^ t >>> 7, 61 | t) ^ t; return ((t ^ t >>> 14) >>> 0) / 4294967296; };
const raw: number[][] = [[40,775],[80,720],[130,720],[120,690],[130,660],[110,625],[125,590],[120,550],[160,545],[180,495],[155,460],[118,435],[150,403],[185,410],[190,435],[260,428],[245,365],[265,350],[268,310],[290,295],[320,315],[340,355],[365,380],[400,415],[470,410],[525,422],[600,412],[635,385],[620,345],[622,320],[635,290],[720,283],[775,270],[780,225],[810,208],[850,240],[870,255],[910,205],[950,190],[975,140],[990,85],[1060,65],[1120,95],[1190,57],[1225,85],[1240,140],[1270,155],[1330,130],[1355,115],[1385,180],[1420,185],[1440,245],[1490,237],[1505,300],[1475,330],[1470,370],[1410,375],[1385,400],[1330,490],[1320,520],[1325,555],[1300,580],[1280,660],[1250,700],[1240,780],[1215,820],[1220,850],[1180,880],[1180,960],[1155,975],[1140,1040],[1060,1030],[1040,1095],[1000,1070],[950,1100],[915,1080],[855,1095],[820,1075],[790,1080],[740,1155],[695,1140],[670,1180],[625,1200],[595,1185],[550,1260],[480,1240],[420,1245],[370,1215],[355,1175],[300,1155],[265,1075],[215,1040],[200,990],[140,940],[100,870],[85,790]];
const toMap = (p: number[]) => [p[0] / 2.272 - 11, p[1] / 3 + 178];
const poly = raw.map(toMap);
const r1 = rng(7);
const outline = (() => {
  const out: string[] = [];
  poly.forEach((a, i) => {
    const b = poly[(i + 1) % poly.length];
    const n = Math.max(1, Math.round(Math.hypot(b[0] - a[0], b[1] - a[1]) / 4));
    for (let k = 0; k < n; k++) {
      const t = k / n;
      const j = k === 0 ? 0 : 3;
      out.push(`${(a[0] + (b[0] - a[0]) * t + (r1() - .5) * j).toFixed(1)},${(a[1] + (b[1] - a[1]) * t + (r1() - .5) * j).toFixed(1)}`);
    }
  });
  return 'M' + out.join('L') + 'Z';
})();
const inside = (x: number, y: number) => {
  let c = false;
  for (let i = 0, j = poly.length - 1; i < poly.length; j = i++) {
    const [xi, yi] = poly[i]; const [xj, yj] = poly[j];
    if ((yi > y) !== (yj > y) && x < (xj - xi) * (y - yi) / (yj - yi) + xi) c = !c;
  }
  return c;
};
const dots = (() => {
  const r = rng(42); const list: { x: number; y: number; w: number; h: number; c: string }[] = [];
  let guard = 0;
  while (list.length < 330 && guard++ < 5000) {
    const x = r() * 640, y = 190 + r() * 400;
    if (!inside(x, y) || !inside(x + 5, y + 5) || !inside(x - 5, y - 5)) continue;
    if (y > 330 && r() < .35) continue;
    const big = r() < .07;
    list.push({ x, y, w: big ? 2.4 : 1.1, h: big ? 3.5 : 1.7, c: r() < .15 ? '#4b1a80' : '#4f6aa8' });
  }
  return list;
})();
const blobs = [[1222, 145], [1093, 467], [343, 722], [585, 1130], [582, 1085]].map(toMap);

const HungaryMap = () => (
  <svg width="657" height="790" viewBox="0 0 657 790" xmlns="http://www.w3.org/2000/svg">
    {dots.map((d, i) => <rect key={i} x={d.x} y={d.y} width={d.w} height={d.h} fill={d.c} />)}
    {blobs.map((b, i) => <circle key={i} cx={b[0]} cy={b[1]} r={i === 4 ? 1.500 : 2.800} fill="#22dfea" />)}
    <path d={outline} fill="none" stroke="#c8141e" strokeWidth="1.800" strokeLinejoin="round" />
  </svg>
);

/* ---------- data tables ---------- */
const Col = styled.col<{ $w: number }>`width: ${p => p.$w}px;`;
const ROW_BG = '#dfffff';
const cols1 = [33, 61, 65, 79, 91, 49, 58, 46, 50, 36, 44, 80, 45, 50, 54, 46, 78, 33, 96, 95, 57, 49];
const head1 = ['Jel.', 'Folyamat|darab', 'Folyamat', 'Megjegyzés', 'Részfolyamat', 'Ügyinté', 'Feladat|állapot', 'Cél|össz.', 'Össz.|blokk', 'Prior', 'Prior.|lezárt', 'Másodlagos', 'Cél|kész', 'Össz.|kész|blokk', 'Kérdés', 'Terep', 'Terep./Kérd.', '(%)', 'Kezdés', 'Befejezés', 'Folyamat|Felelős', 'Csopor|Felelős'];
const mk1 = (id: string, rf: string, u: string, nums: string, start: string, end: string) =>
  ['', id, 'UFK_201...', '', rf, u, 'Befejez...', ...nums.split(' '), start, end, 'Medve...', 'Medv...'];
const rows1 = [
  mk1('9781', 'Ellenőrzés', 'Moln...', '0 2 0 0 0 2 2 0 0 0 0', '2014-04-14 12:19', '2014-04-14 12:22'),
  mk1('9795', 'Rajzolás', 'Moln...', '0 1 1 1 0 1 1 0 0 0 0', '2014-04-14 12:16', '2014-04-14 12:20'),
  mk1('9800', 'Ellenőrzés', 'Maro...', '1 8 0 0 0 7 7 0 0 0 700', '2014-04-14 11:04', '2014-04-14 12:01'),
  mk1('9794', 'Ellenőrzés', 'Moln...', '0 6 0 0 0 6 6 0 0 0 0', '2014-04-01 13:25', '2014-04-01 14:31'),
  mk1('9787', 'CAPI', 'Ocsk...', '0 1 0 0 0 1 1 0 0 0 0', '2014-03-17 10:10', '2014-03-17 10:14'),
  mk1('9779', 'Átnézés', 'Herm...', '0 21 0 0 0 20 0 0 7 0 0', '2014-03-06 13:49', '2014-03-06 14:54'),
];
const sum1 = ['Ös...', '-', '-', '-', '-', '-', '-', '1', '8', '0', '0', '0', '7', '7', '0', '0', '0', '-', '-', '-', '-', '-'];
const cols2 = [51, 47, 43, 43, 48, 83, 60, 75, 109, 49, 58, 61, 58, 61, 48, 70, 94, 73, 63, 101];
const head2 = ['Jel.', 'Gát', 'NMT', 'Vár', 'Zűrös', 'Folyamat|darab', 'Folyamat', 'Feladat|állapot', 'Részfolyamat', 'Ügyinté', 'Cél|össz.', 'Állapot', 'Prioritás', 'MVH|prioritás', 'MVH|Prior.', 'Másodlago', 'Várakozó|folyamatok', 'Kérdés', 'Terep', 'Terep./Kérd.'];
const mk2 = (n: string) => ['', '0', '0', '0', '0', '9800', 'UFK_20...', 'Befejezett', 'Ellenőrzés', 'Maro...', n, 'Befejez...', '#', '100', '0', '0', '', '0', '0', '0'];
const rows2 = [mk2('3'), mk2('1'), mk2('1'), mk2('1'), mk2('1')];
const sum2 = ['Össz.', '-', '-', '-', '-', '-', '-', '-', '-', '-', '3', '-', '-', '-', '0', '0', '-', '0', '0', '0'];
const cols3 = [102, 56];
const head3 = ['Dokumentum|azonosító', 'Ügyirat|csoport'];
const rows3 = [['FÖMI/1206-1/2014', '9599'], ['FÖMI/1206-1/2014', '9599'], ['FÖMI/1206-1/2014', '9599']];

const Lines = ({ s }: { s: string }) => <>{s.split('|').map((l, i) => <React.Fragment key={i}>{i > 0 && <br />}{l}</React.Fragment>)}</>;
const sumW = (c: number[]) => c.reduce((a, b) => a + b, 0);

const CheckBox = ({ on }: { on?: boolean }) => <Check>{on ? <Ico n="tick" box={12} /> : null}</Check>;

const DataTable = ({ cols, head, rows, sel, headH, bg, checked, jel = true, double }: { cols: number[]; head: string[]; rows: string[][]; sel: number; headH: number; bg: string; checked?: number; jel?: boolean; double?: boolean }) => (
  <Table $w={sumW(cols)} $double={double}>
    <colgroup>{cols.map((w, i) => <Col key={i} $w={w} />)}</colgroup>
    <thead><HeadRow $h={headH}>{head.map((h, i) => <Th key={i}><Lines s={h} /></Th>)}</HeadRow></thead>
    <tbody>
      {rows.map((r, ri) => (
        <Tr key={ri} $bg={ri === sel ? '#4682b4' : bg}>
          {r.map((c, ci) => {
            const isSel = ri === sel;
            if (jel && ci === 0) return <Td key={ci} $jel $sel={isSel} $center><CheckBox on={checked === ri} /></Td>;
            if (c === '#') return <Td key={ci} $sel={isSel} $center><CheckBox /></Td>;
            return <Td key={ci} $sel={isSel} $tight={/\d{4}/.test(c)}>{c}</Td>;
          })}
        </Tr>
      ))}
    </tbody>
  </Table>
);
const SumTable = ({ cols, vals, double }: { cols: number[]; vals: string[]; double?: boolean }) => (
  <Table $w={sumW(cols)} $double={double}>
    <colgroup>{cols.map((w, i) => <Col key={i} $w={w} />)}</colgroup>
    <tbody><tr>{vals.map((v, i) => <SumTd key={i}>{v}</SumTd>)}</tr></tbody>
  </Table>
);
const HScroll = ({ left, right, grip = true }: { left: number; right?: number; grip?: boolean }) => (
  <HBar>
    <Arrow $dir="l" /><Gap $w={left} /><HThumb>{grip ? 'III' : ''}</HThumb><Arrow $dir="r" $w={right ?? 18} />
  </HBar>
);

const Btns = ({ ml, mt, w = [45, 57, 45] }: { ml: number; mt: number; w?: number[] }) => (
  <BtnRow $ml={ml} $mt={mt}>
    <SmallBtn $w={w[0]}>SQL</SmallBtn><SmallBtn $w={w[1]}>FÁJLBÓL</SmallBtn><SmallBtn $w={w[2]}>ÖSSZES</SmallBtn>
  </BtnRow>
);

const tree: { t: 'root' | 'layer' | 'swatch'; label?: string; check?: 'on' | 'gray'; bg?: string; bd?: string; thick?: boolean; sel?: boolean; plus?: boolean }[] = [
  { t: 'root', label: 'Layers' },
  { t: 'layer', label: 'Környezeti csoportok', check: 'on' },
  { t: 'swatch', bg: '#89cdf1', bd: '#4a7a9a' },
  { t: 'layer', label: 'Folyamatdarabok', check: 'on' },
  { t: 'swatch', bg: '#e7b3f0', bd: '#7a2a8a' },
  { t: 'layer', label: 'BLOKK_BASE', check: 'gray' },
  { t: 'swatch', bg: '#fff', bd: '#c0141c', thick: true },
  { t: 'layer', label: 'BLOKK_WORK', check: 'gray' },
  { t: 'swatch', bg: '#fff', bd: '#c0141c', thick: true },
  { t: 'layer', label: 'FOLT_BASE', check: 'gray' },
  { t: 'swatch', bg: '#6aa86a', bd: '#3a6a3a', label: 'Kiosztott foltok' },
  { t: 'swatch', bg: '#d6f5b6', bd: '#8ab06a', label: 'Kiosztható foltok' },
  { t: 'layer', label: 'FOLT_WORK', check: 'gray' },
  { t: 'swatch', bg: '#6aa86a', bd: '#3a6a3a', label: 'Kiosztott foltok' },
  { t: 'swatch', bg: '#d6f5b6', bd: '#8ab06a', label: 'Kiosztható foltok' },
  { t: 'layer', label: 'Magyarország határa', check: 'on', sel: true },
  { t: 'swatch', bg: '#fff', bd: '#c0141c', thick: true },
  { t: 'layer', label: 'Raszteres adatbázis', check: 'on', plus: true },
];

const WinControls = () => (
  <WinBtns>
    <WinBtn $w={28}><svg viewBox="0 0 14 12"><rect x="2" y="8" width="10" height="3" fill="#fff" stroke="#2a4a6e" strokeWidth=".7" /></svg></WinBtn>
    <WinBtn $w={27}><svg viewBox="0 0 14 12"><rect x="2.500" y="1.500" width="9" height="8" fill="none" stroke="#fff" strokeWidth="2" /><rect x="1.500" y=".5" width="11" height="10" fill="none" stroke="#2a4a6e" strokeWidth=".6" /></svg></WinBtn>
    <WinBtn $w={46}><svg viewBox="0 0 14 12"><path d="M2 1l10 10M12 1L2 11" stroke="#2a4a6e" strokeWidth="3.400" /><path d="M2 1l10 10M12 1L2 11" stroke="#fff" strokeWidth="2" /></svg></WinBtn>
  </WinBtns>
);

export default function App() {
  return (
    <Desktop>
      <Global />
      <ArcWin>
        <ArcTitle>
          <TitleIcon viewBox="0 0 16 18"><circle cx="8" cy="8" r="7" fill="#3f8aa8" stroke="#1e4a60" /><path d="M4 6c2-3 6-3 7 0-1 3-5 4-7 0z" fill="#7ec48a" /><path d="M10 13l3 4" stroke="#1e2a30" strokeWidth="2" /></TitleIcon>
          <TitleText>Untitled - ArcMap - ArcEditor</TitleText>
          <WinControls />
        </ArcTitle>
        <ArcBody>
          <MenuBar>
            {['File', 'Edit', 'View', 'Bookmarks', 'Insert', 'Selection', 'Geoprocessing', 'Customize', 'Windows', 'Help'].map(m => <MenuItem key={m}>{m}</MenuItem>)}
          </MenuBar>
          <ToolRow>{renderTokens(row1)}</ToolRow>
          <ToolRow>{renderTokens(row2)}</ToolRow>
          <ToolRow>{renderTokens(row3)}</ToolRow>
          <Dock>{renderTokens(row4)}</Dock>
          <Work>
            <TocCol>
              <TocHead>
                <TocTitle>Table Of Contents</TocTitle>
                <TocBtns><svg width="10" height="12" viewBox="0 0 10 12"><path d="M3 1h4v5l1 1H2l1-1zM5 7v5" fill="none" stroke="#445" /></svg>×</TocBtns>
              </TocHead>
              <TocTools>
                <Tool $active><Ico n="tDraw" /></Tool>
                <Tool><Ico n="tDb" /></Tool>
                <Tool><Ico n="tVis" /></Tool>
                <Tool><Ico n="tSel" /></Tool>
                <Sep />
                <Tool><Ico n="tOpt" /></Tool>
              </TocTools>
              <TreeBox>
                <TreeScroll>
                  {tree.map((r, i) => {
                    if (r.t === 'root') return <TreeRow key={i} $pad={8}><Expander /><Tool $w={16}><Ico n="lyr" /></Tool><Gap $w={4} /><TreeText><b>{r.label}</b></TreeText></TreeRow>;
                    if (r.t === 'layer') return (
                      <TreeRow key={i} $pad={27}>
                        <Expander $plus={r.plus} />
                        <TocBox $gray={r.check === 'gray'}><Ico n={r.check === 'gray' ? 'tickG' : 'tick'} box={12} /></TocBox>
                        <TreeText $sel={r.sel}>{r.label}</TreeText>
                      </TreeRow>
                    );
                    return <TreeRow key={i} $pad={59}><Swatch $bg={r.bg!} $bd={r.bd!} $thick={r.thick} />{r.label ? <TreeText>{r.label}</TreeText> : null}</TreeRow>;
                  })}
                </TreeScroll>
                <HBar $h={14}><Arrow $dir="l" /><HThumb $w={120}>III</HThumb><Gap $w={8} /><Arrow $dir="r" /></HBar>
              </TreeBox>
            </TocCol>
            <MapCol>
              <MapArea>
                <MapCanvas><HungaryMap /></MapCanvas>
                <VBar>
                  <Arrow $dir="u" $w={15} />
                  <VThumbWrap><VThumb /></VThumbWrap>
                  <Arrow $dir="d" $w={15} />
                </VBar>
              </MapArea>
              <MapBottom>
                <Gap $w={2} />
                <MiniTool $active><Ico n="dv" /></MiniTool>
                <MiniTool><Ico n="lv" /></MiniTool>
                <Sep />
                <Gap $w={6} />
                <MiniTool><Ico n="ref" /></MiniTool>
                <MiniTool><Ico n="pause" /></MiniTool>
                <Arrow $dir="l" $w={14} />
                <Gap $w={385} />
                <HThumb $w={15} />
                <Gap $w={140} />
                <Arrow $dir="r" $w={20} />
              </MapBottom>
            </MapCol>
          </Work>
          <StatusBar>456446,838  -103398,299 Meters</StatusBar>
        </ArcBody>
      </ArcWin>

      <RightWin>
        <RTitle>
          <TitleIcon viewBox="0 0 16 18"><rect x="0" y="1" width="16" height="16" fill="#cfcabc" /><circle cx="8" cy="8" r="4" fill="#fff" stroke="#333" /><path d="M6 8a2 2 0 0 0 4 0" fill="#2a2a2a" /><rect x="1" y="13" width="14" height="3" fill="#6a7a4a" /></TitleIcon>
          <RTitleText>MePAR Folyamatkezelő</RTitleText>
          <WinControls />
        </RTitle>
        <Frame>
          <HeadTop>
            <Brand>ÜFK</Brand>
            <HeadInfo>Adatbázis: mepar</HeadInfo>
            <HeadInfo>Bejelentkezve: Szekeres Ádám (FF)</HeadInfo>
            <Legend>
              Kért blokkok<Led $c="#5c9a54" $ml={8} $mr={22} $w={17} />
              Lezárható<Led $c="#c8e24a" $ml={6} $mr={18} $w={16} />
              Elsődleges<Led $c="#5c9a54" $ml={10} $mr={0} $w={15} />
            </Legend>
          </HeadTop>
          <TabRow>
            <Tab $w={101}>Folyamat szervezés</Tab>
            <Tab $w={117}>Létrehozás/Módosítás</Tab>
            <Tab $w={55}>Eszközök</Tab>
            <Tab $w={84}>Munkaszervező</Tab>
            <Tab $w={44} $on>ÜFK</Tab>
            <Tab $w={41}>Adatok</Tab>
          </TabRow>
          <Content>
            <MainCol>
              <Section $h={377}>
                <PanelHead>
                  <PanelTitle $w={184}>Folyamatdarabok (0)</PanelTitle>
                  <OptLabel><CheckBox on />Térkép</OptLabel>
                </PanelHead>
                <Btns ml={10} mt={3} />
                <GridWrap $ml={10} $w={1295} $h={251}>
                  <DataTable cols={cols1} head={head1} rows={rows1} sel={2} headH={48} bg={ROW_BG} />
                </GridWrap>
                <SumWrap $ml={10} $w={1281}><SumTable cols={cols1} vals={sum1} /></SumWrap>
                <StatusRow $ml={10} $w={1298} $mt={6}>
                  <div><StatText>Szűrve: 6/16</StatText><StatText>Szelektálva: 1/6</StatText></div>
                  <ExportCol><ExportBtn $w={45}>EXPORT</ExportBtn><Dash>-</Dash></ExportCol>
                </StatusRow>
              </Section>
              <Splitter />
              <HFill $w={1317} $ml={0} $mt={3}>
                <PanelHead>
                  <PanelTitle $w={168}>Ügyirat Csoportok (1)</PanelTitle>
                  <OptLabel $mr={15}><CheckBox />Mindet mutat</OptLabel>
                  <OptLabel $mr={5}><CheckBox />Szomszédság figyelése</OptLabel>
                  <OptLabel><CheckBox />Térkép</OptLabel>
                </PanelHead>
              </HFill>
              <Btns ml={13} mt={4} />
              <GridWrap $ml={13} $w={1295} $h={264}>
                <DataTable cols={cols2} head={head2} rows={rows2} sel={0} headH={33} bg="#fff" checked={0} double />
              </GridWrap>
              <HFill $w={1295} $ml={13}><HScroll left={221} /></HFill>
              <SumWrap $ml={13} $w={1278} $mt={4}><SumTable cols={cols2} vals={sum2} double /></SumWrap>
              <StatusRow $ml={13} $w={1295} $mt={6}>
                <StatText>Szűrve: 5/27</StatText>
                <ExportBtn $w={45}>EXPORT</ExportBtn>
              </StatusRow>
              <FilterRow>
                <FilterText>Szelektálva: 1/5</FilterText>
                <FilterInput />
                <Gap $w={7} />
                <IconBtn $w={24} $h={21}><Ico n="disk" /></IconBtn>
                <RadioRow>
                  <RadioItem $w={50}><Radio $on />VHR</RadioItem>
                  <RadioItem $w={62}><Radio />Megye</RadioItem>
                  <RadioItem $w={62}><Radio />Bezárt</RadioItem>
                  <RadioItem $w={48}><Radio />Gát</RadioItem>
                  <RadioItem $w={54}><Radio />NMT</RadioItem>
                  <RadioItem $w={47}><Radio />Vár</RadioItem>
                  <RadioItem $w={50}><Radio />Zűrös</RadioItem>
                </RadioRow>
                <Dash>-</Dash>
              </FilterRow>
              <BottomRow>
                <BigBtn>Kiosztáshoz<br />táblafrissítés</BigBtn>
                <Field>
                  <FieldLegend>Műveletek</FieldLegend>
                  <FieldInner>
                    <FieldLabel $w={88}>Részfolyamat:</FieldLabel>
                    <Select $w={120}>Terepre küldés</Select>
                    <Gap $w={9} />
                    <FieldLabel $w={26}>Üi.:</FieldLabel>
                    <Select $w={119}>-</Select>
                    <Gap $w={8} />
                    <IconBtn $w={23} $h={23}><Ico n="go" /></IconBtn>
                  </FieldInner>
                </Field>
              </BottomRow>
            </MainCol>
            <VDivider />
            <SideCol>
              <PanelHead $w={177}>
                <PanelTitle $w={72}>Ügyiratok</PanelTitle>
                <OptLabel><CheckBox />Mindet mutat</OptLabel>
              </PanelHead>
              <Btns ml={10} mt={4} />
              <GridWrap $ml={10} $w={158} $h={717}>
                <DataTable cols={cols3} head={head3} rows={rows3} sel={0} headH={33} bg="#fff" jel={false} />
              </GridWrap>
              <HFill $w={158} $ml={10}><HBar><Arrow $dir="l" /><HThumb $w={116}>III</HThumb><Gap $w={2} /><Arrow $dir="r" $w={22} /></HBar></HFill>
              <StatusRow $ml={10} $w={158} $mt={38}>
                <div><StatText>Szűrve: 3/32</StatText><StatText>Szelektálva: 1/3</StatText></div>
                <ExportCol><ExportBtn $w={45}>EXPORT</ExportBtn><Dash>-</Dash></ExportCol>
              </StatusRow>
            </SideCol>
          </Content>
          <Footer>
            <FootBtn $w={150}><Ico n="refresh" />Teljes form frissítése</FootBtn>
            <FootBtn $w={68}><Ico n="power" />Kilépés</FootBtn>
          </Footer>
        </Frame>
      </RightWin>
    </Desktop>
  );
}
